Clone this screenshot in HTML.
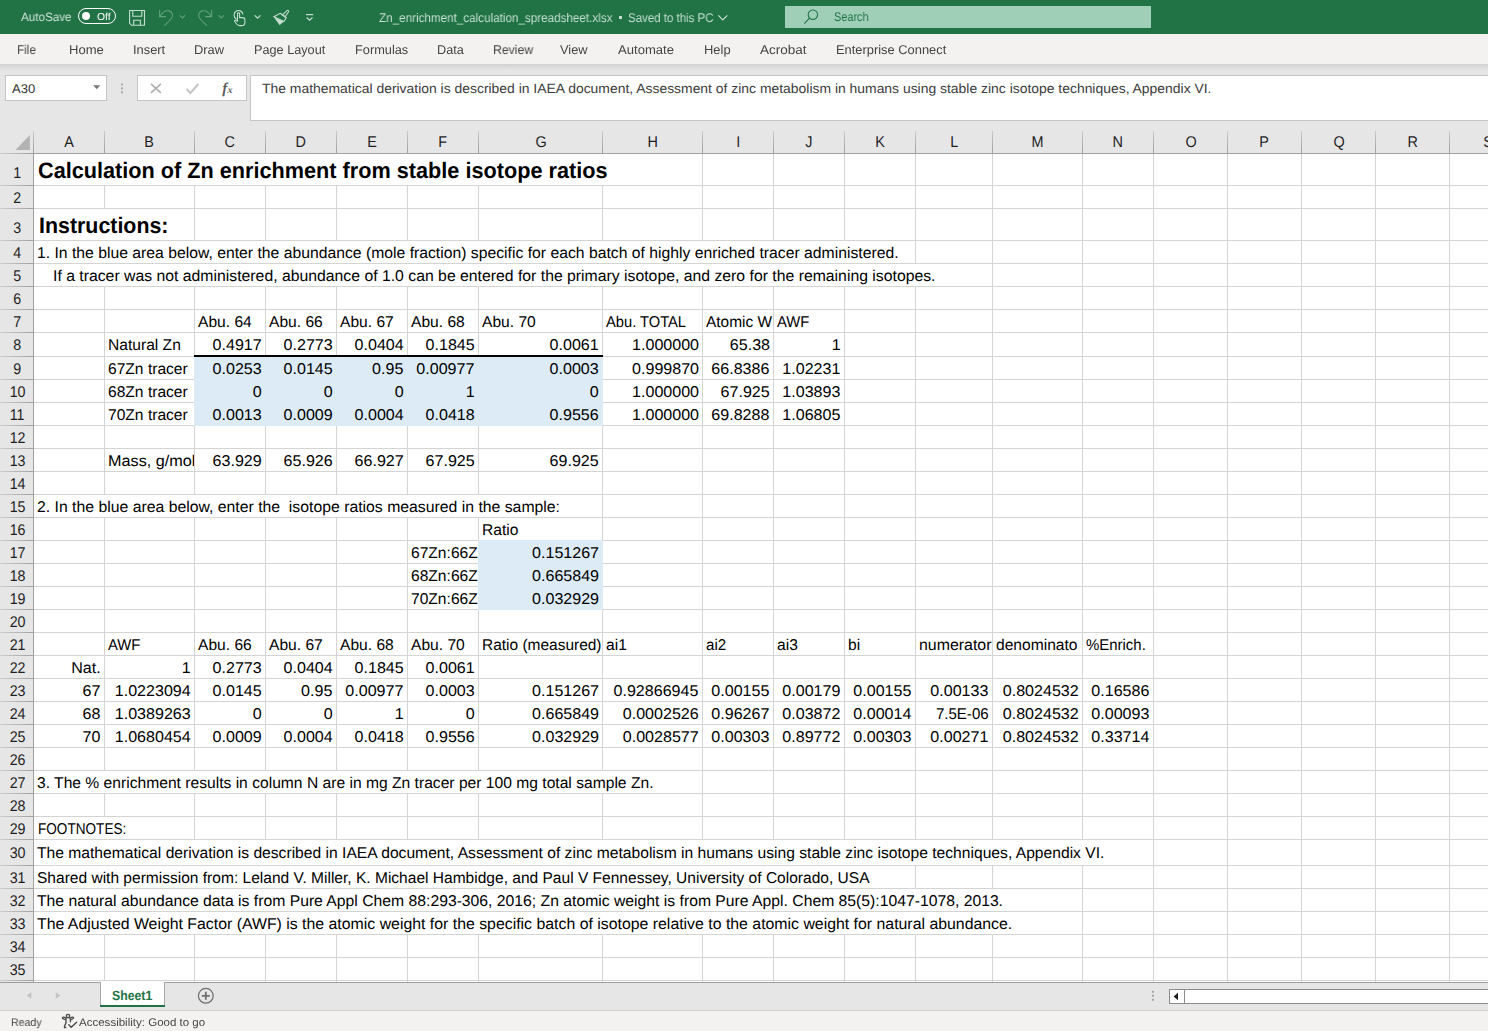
<!DOCTYPE html>
<html lang="en"><head><meta charset="utf-8"><title>Zn_enrichment_calculation_spreadsheet.xlsx - Excel</title>
<style>
html,body{margin:0;padding:0;width:1488px;height:1031px;overflow:hidden;background:#e6e6e6;font-family:'Liberation Sans', sans-serif;}
#app{position:relative;width:1488px;height:1031px;overflow:hidden;background:#e6e6e6;}
#app div,#app svg{position:absolute;}
section,header,nav,footer,main{display:block;position:absolute;left:0;top:0;width:1488px;height:0;}
.t{white-space:pre;line-height:normal;color:#000;text-rendering:geometricPrecision;}
.g{will-change:transform;}
.clip{}
#titlebar-bg{left:0;top:0;width:1488px;height:34px;background:#217346;}
#ribbon-bg{left:0;top:34px;width:1488px;height:30px;background:#f3f2f1;}
#ribbon-shadow{left:0;top:64px;width:1488px;height:7px;background:linear-gradient(#cfcfcf,#dadada 35%,#e6e6e6);}
#grid-bg{left:34px;top:154px;width:1454px;height:828px;background:#fff;}
</style></head><body><div id="app">
<header id="titlebar"><div id="titlebar-bg"></div>
<div style="left:785px;top:6px;width:366px;height:22px;background:#a0cfb8"></div>
<div class="t g" style="top:10px;font-size:12.1px;left:21px;color:#cfe4d8;transform:scaleX(0.9628);transform-origin:0 0">AutoSave</div>
<div class="t g" style="top:12px;font-size:10.2px;left:97px;color:#ffffff;transform:scaleX(1.0145);transform-origin:0 0">Off</div>
<div class="t g" style="top:11px;font-size:12.6px;left:378.6px;color:#c4dfd0;transform:scaleX(0.9265);transform-origin:0 0">Zn_enrichment_calculation_spreadsheet.xlsx</div>
<div class="t g" style="top:11px;font-size:12.6px;left:628px;color:#c4dfd0;transform:scaleX(0.9114);transform-origin:0 0">Saved to this PC</div>
<div class="t g" style="top:10px;font-size:12.6px;left:834px;color:#217346;transform:scaleX(0.8645);transform-origin:0 0">Search</div>
<div style="left:77.5px;top:7.5px;width:38px;height:16px;border:1.3px solid #fff;border-radius:9px;box-sizing:border-box"></div>
<div style="left:82px;top:12px;width:8px;height:8px;border-radius:50%;background:#fff"></div>
<div style="left:618.7px;top:16.4px;width:3px;height:3px;background:#c4dfd0"></div>
<svg style="left:0;top:0" width="1488" height="34" viewBox="0 0 1488 34" fill="none" stroke-linecap="butt">
<g stroke="#c4dfd0" stroke-width="1.1">
<path d="M129.6 10.5H144.5V25.3H131.6L129.6 23.3Z"/><path d="M132.8 10.5V16.2H141.8V10.5"/><path d="M133.7 25.3V20.3H140.4V25.3"/>
<path d="M254.7 15.4L257.6 18.2L260.5 15.4" stroke-width="1.2"/>
<path d="M306 14.6H313.2" stroke-width="1.2"/><path d="M306.7 17.5L309.6 20.1L312.5 17.5" stroke-width="1.2"/>
<path d="M718.3 15.4L722.8 19.9L727.3 15.4" stroke-width="1.2"/>
<path d="M236.5 19.5C233.2 17.5 233.4 13 236 11.3C238.6 9.6 242.5 10.8 243 14.5"/>
<path d="M237.5 21V13.6C237.5 12.4 239.6 12.4 239.6 13.6V17.6H242.6C244 17.6 244.9 18.4 244.9 19.8V22.5C244.9 24.4 243.6 25.6 241.8 25.6H239.6C238.2 25.6 237.4 25 236.6 24L234.6 21.3C234.3 20.6 235.3 19.9 236 20.4L237.5 21.6"/>
<path d="M287.3 10.4C288.1 9.9 289.1 10.9 288.6 11.7L285 16.8L282.4 14.9Z"/>
<path d="M280.2 13.3L286.3 17.7L284 21.4L273.9 16.8Z"/>
</g>
<path d="M274.5 17.5L283.6 21.6L279.6 24.8Z" fill="#c4dfd0" stroke="#c4dfd0" stroke-width="0.6"/>
<g stroke="#63a07f" stroke-width="1.1">
<path d="M159.6 10.1V16.6H166"/><path d="M160 16.3C163 11.5 166.5 10.2 169.2 10.9C172.4 11.8 173.5 15.3 171.5 18.2C170.5 19.6 166.5 23.5 164.3 25.7"/>
<path d="M179.9 15.4L182.5 17.9L185.1 15.4"/>
<path d="M211.6 10.1V16.6H205.2"/><path d="M211.2 16.3C208.2 11.5 204.7 10.2 202 10.9C198.8 11.8 197.7 15.3 199.7 18.2C200.7 19.6 204.7 23.5 206.9 25.7"/>
<path d="M218.7 15.4L221.3 17.9L223.9 15.4"/>
</g>
<g stroke="#217346" stroke-width="1.1"><circle cx="812.9" cy="14.7" r="4.7"/><path d="M809.5 18.1L804.3 23.7"/></g>
</svg></header>
<nav id="ribbon"><div id="ribbon-bg"></div><div id="ribbon-shadow"></div>
<div class="t g" style="top:43px;font-size:12.7px;left:16.6px;color:#444444;transform:scaleX(0.9241);transform-origin:0 0">File</div>
<div class="t g" style="top:43px;font-size:12.7px;left:68.8px;color:#444444;transform:scaleX(1.0283);transform-origin:0 0">Home</div>
<div class="t g" style="top:43px;font-size:12.7px;left:132.6px;color:#444444;transform:scaleX(1.0147);transform-origin:0 0">Insert</div>
<div class="t g" style="top:43px;font-size:12.7px;left:193.8px;color:#444444;transform:scaleX(1.0132);transform-origin:0 0">Draw</div>
<div class="t g" style="top:43px;font-size:12.7px;left:253.8px;color:#444444;transform:scaleX(0.9979);transform-origin:0 0">Page Layout</div>
<div class="t g" style="top:43px;font-size:12.7px;left:354.7px;color:#444444;transform:scaleX(1.0061);transform-origin:0 0">Formulas</div>
<div class="t g" style="top:43px;font-size:12.7px;left:436.9px;color:#444444;transform:scaleX(0.9883);transform-origin:0 0">Data</div>
<div class="t g" style="top:43px;font-size:12.7px;left:492.8px;color:#444444;transform:scaleX(0.9637);transform-origin:0 0">Review</div>
<div class="t g" style="top:43px;font-size:12.7px;left:560.2px;color:#444444;transform:scaleX(1.0117);transform-origin:0 0">View</div>
<div class="t g" style="top:43px;font-size:12.7px;left:617.5px;color:#444444;transform:scaleX(1.0311);transform-origin:0 0">Automate</div>
<div class="t g" style="top:43px;font-size:12.7px;left:703.8px;color:#444444;transform:scaleX(1.0194);transform-origin:0 0">Help</div>
<div class="t g" style="top:43px;font-size:12.7px;left:759.5px;color:#444444;transform:scaleX(1.0632);transform-origin:0 0">Acrobat</div>
<div class="t g" style="top:43px;font-size:12.7px;left:835.8px;color:#444444;transform:scaleX(1.0156);transform-origin:0 0">Enterprise Connect</div></nav>
<section id="formulabar">
<div style="left:5px;top:75px;width:102px;height:26px;background:#fff;border:1px solid #c6c6c6;box-sizing:border-box"></div>
<div style="left:137px;top:75px;width:110px;height:26px;background:#fff;border:1px solid #c6c6c6;box-sizing:border-box"></div>
<div style="left:250px;top:75px;width:1240px;height:46px;background:#fff;border:1px solid #c6c6c6;box-sizing:border-box"></div>
<div class="t" style="top:82px;font-size:12.6px;left:11.7px;color:#333333;transform:scaleX(1.0347);transform-origin:0 0">A30</div>
<div class="t" style="top:81px;font-size:13.3px;left:261.6px;color:#3b3b3b;transform:scaleX(1.0461);transform-origin:0 0">The mathematical derivation is described in IAEA document, Assessment of zinc metabolism in humans using stable zinc isotope techniques, Appendix VI.</div>
<div class="t" style="top:81px;font-size:15px;left:222.2px;color:#5e5e5e;font-weight:bold;font-style:italic;font-family:'Liberation Serif', serif">f</div>
<div class="t" style="top:85px;font-size:10px;left:227.6px;color:#5e5e5e;font-weight:bold;font-style:italic;font-family:'Liberation Serif', serif">x</div>
<svg style="left:0;top:70px" width="260" height="40" viewBox="0 70 260 40" fill="none">
<path d="M93.2 85.2H100.2L96.7 89.2Z" fill="#777"/>
<g fill="#acacac"><rect x="121" y="83.5" width="2" height="2"/><rect x="121" y="87.4" width="2" height="2"/><rect x="121" y="91.2" width="2" height="2"/></g>
<path d="M151 83.8L160.8 92.8M160.8 83.8L151 92.8" stroke="#b0b0b0" stroke-width="1.6"/>
<path d="M186.6 89L190.4 93L198.4 84" stroke="#c4c4c4" stroke-width="1.9"/>
</svg></section>
<main id="sheet"><div id="grid-bg"></div>
<div style="left:34px;top:185px;width:1454px;height:1px;background:#d4d4d4"></div>
<div style="left:34px;top:208px;width:1454px;height:1px;background:#d4d4d4"></div>
<div style="left:34px;top:240px;width:1454px;height:1px;background:#d4d4d4"></div>
<div style="left:34px;top:263px;width:1454px;height:1px;background:#d4d4d4"></div>
<div style="left:34px;top:286px;width:1454px;height:1px;background:#d4d4d4"></div>
<div style="left:34px;top:309px;width:1454px;height:1px;background:#d4d4d4"></div>
<div style="left:34px;top:332px;width:1454px;height:1px;background:#d4d4d4"></div>
<div style="left:34px;top:356px;width:1454px;height:1px;background:#d4d4d4"></div>
<div style="left:34px;top:379px;width:1454px;height:1px;background:#d4d4d4"></div>
<div style="left:34px;top:402px;width:1454px;height:1px;background:#d4d4d4"></div>
<div style="left:34px;top:425px;width:1454px;height:1px;background:#d4d4d4"></div>
<div style="left:34px;top:448px;width:1454px;height:1px;background:#d4d4d4"></div>
<div style="left:34px;top:471px;width:1454px;height:1px;background:#d4d4d4"></div>
<div style="left:34px;top:494px;width:1454px;height:1px;background:#d4d4d4"></div>
<div style="left:34px;top:517px;width:1454px;height:1px;background:#d4d4d4"></div>
<div style="left:34px;top:540px;width:1454px;height:1px;background:#d4d4d4"></div>
<div style="left:34px;top:563px;width:1454px;height:1px;background:#d4d4d4"></div>
<div style="left:34px;top:586px;width:1454px;height:1px;background:#d4d4d4"></div>
<div style="left:34px;top:609px;width:1454px;height:1px;background:#d4d4d4"></div>
<div style="left:34px;top:632px;width:1454px;height:1px;background:#d4d4d4"></div>
<div style="left:34px;top:655px;width:1454px;height:1px;background:#d4d4d4"></div>
<div style="left:34px;top:678px;width:1454px;height:1px;background:#d4d4d4"></div>
<div style="left:34px;top:701px;width:1454px;height:1px;background:#d4d4d4"></div>
<div style="left:34px;top:724px;width:1454px;height:1px;background:#d4d4d4"></div>
<div style="left:34px;top:747px;width:1454px;height:1px;background:#d4d4d4"></div>
<div style="left:34px;top:770px;width:1454px;height:1px;background:#d4d4d4"></div>
<div style="left:34px;top:793px;width:1454px;height:1px;background:#d4d4d4"></div>
<div style="left:34px;top:816px;width:1454px;height:1px;background:#d4d4d4"></div>
<div style="left:34px;top:839px;width:1454px;height:1px;background:#d4d4d4"></div>
<div style="left:34px;top:865px;width:1454px;height:1px;background:#d4d4d4"></div>
<div style="left:34px;top:888px;width:1454px;height:1px;background:#d4d4d4"></div>
<div style="left:34px;top:911px;width:1454px;height:1px;background:#d4d4d4"></div>
<div style="left:34px;top:934px;width:1454px;height:1px;background:#d4d4d4"></div>
<div style="left:34px;top:957px;width:1454px;height:1px;background:#d4d4d4"></div>
<div style="left:34px;top:980px;width:1454px;height:1px;background:#d4d4d4"></div>
<div style="left:104px;top:154px;width:1px;height:828px;background:#d4d4d4"></div>
<div style="left:194px;top:154px;width:1px;height:828px;background:#d4d4d4"></div>
<div style="left:265px;top:154px;width:1px;height:828px;background:#d4d4d4"></div>
<div style="left:336px;top:154px;width:1px;height:828px;background:#d4d4d4"></div>
<div style="left:407px;top:154px;width:1px;height:828px;background:#d4d4d4"></div>
<div style="left:478px;top:154px;width:1px;height:828px;background:#d4d4d4"></div>
<div style="left:602px;top:154px;width:1px;height:828px;background:#d4d4d4"></div>
<div style="left:702px;top:154px;width:1px;height:828px;background:#d4d4d4"></div>
<div style="left:773px;top:154px;width:1px;height:828px;background:#d4d4d4"></div>
<div style="left:844px;top:154px;width:1px;height:828px;background:#d4d4d4"></div>
<div style="left:915px;top:154px;width:1px;height:828px;background:#d4d4d4"></div>
<div style="left:992px;top:154px;width:1px;height:828px;background:#d4d4d4"></div>
<div style="left:1082px;top:154px;width:1px;height:828px;background:#d4d4d4"></div>
<div style="left:1153px;top:154px;width:1px;height:828px;background:#d4d4d4"></div>
<div style="left:1227px;top:154px;width:1px;height:828px;background:#d4d4d4"></div>
<div style="left:1301px;top:154px;width:1px;height:828px;background:#d4d4d4"></div>
<div style="left:1375px;top:154px;width:1px;height:828px;background:#d4d4d4"></div>
<div style="left:1449px;top:154px;width:1px;height:828px;background:#d4d4d4"></div>
<div style="left:34px;top:154px;width:569px;height:31px;background:#fff"></div>
<div style="left:34px;top:209px;width:71px;height:31px;background:#fff"></div>
<div style="left:34px;top:241px;width:811px;height:22px;background:#fff"></div>
<div style="left:34px;top:264px;width:882px;height:22px;background:#fff"></div>
<div style="left:34px;top:495px;width:445px;height:22px;background:#fff"></div>
<div style="left:34px;top:771px;width:569px;height:22px;background:#fff"></div>
<div style="left:34px;top:817px;width:71px;height:22px;background:#fff"></div>
<div style="left:34px;top:840px;width:1049px;height:25px;background:#fff"></div>
<div style="left:34px;top:866px;width:811px;height:22px;background:#fff"></div>
<div style="left:34px;top:889px;width:959px;height:22px;background:#fff"></div>
<div style="left:34px;top:912px;width:959px;height:22px;background:#fff"></div>
<div style="left:194px;top:357px;width:409px;height:69px;background:#ddebf7"></div>
<div style="left:478px;top:540px;width:125px;height:70px;background:#ddebf7"></div>
<div style="left:194px;top:355px;width:409px;height:2px;background:#000"></div>
<div class="t" style="top:158px;font-size:22.3px;left:38px;font-weight:bold;transform:scaleX(0.9718);transform-origin:0 0">Calculation of Zn enrichment from stable isotope ratios</div>
<div class="t" style="top:213px;font-size:22.3px;left:38.6px;font-weight:bold;transform:scaleX(0.959);transform-origin:0 0">Instructions:</div>
<div class="t" style="top:245px;font-size:15.6px;left:37.1px;transform:scaleX(1.009);transform-origin:0 0">1. In the blue area below, enter the abundance (mole fraction) specific for each batch of highly enriched tracer administered.</div>
<div class="t" style="top:268px;font-size:15.6px;left:52.9px;transform:scaleX(1.012);transform-origin:0 0">If a tracer was not administered, abundance of 1.0 can be entered for the primary isotope, and zero for the remaining isotopes.</div>
<div class="t" style="top:314px;font-size:15.6px;left:198px">Abu. 64</div>
<div class="t" style="top:314px;font-size:15.6px;left:269px">Abu. 66</div>
<div class="t" style="top:314px;font-size:15.6px;left:340px">Abu. 67</div>
<div class="t" style="top:314px;font-size:15.6px;left:411px">Abu. 68</div>
<div class="t" style="top:314px;font-size:15.6px;left:482px">Abu. 70</div>
<div class="t" style="top:314px;font-size:15.6px;left:606px;transform:scaleX(0.942);transform-origin:0 0">Abu. TOTAL</div>
<div class="clip" style="left:706px;top:314px;width:67px;height:19px;overflow:hidden"><div class="t" style="font-size:15.6px;transform:scaleX(0.99);transform-origin:0 0;left:0;top:0">Atomic W</div></div>
<div class="t" style="top:314px;font-size:15.6px;left:777px;transform:scaleX(0.95);transform-origin:0 0">AWF</div>
<div class="clip" style="left:108px;top:337px;width:86px;height:19px;overflow:hidden"><div class="t" style="font-size:15.6px;left:0;top:0">Natural Zn</div></div>
<div class="t" style="top:337px;font-size:15.6px;right:1226.3px;transform:scaleX(1.03);transform-origin:100% 0">0.4917</div>
<div class="t" style="top:337px;font-size:15.6px;right:1155.3px;transform:scaleX(1.03);transform-origin:100% 0">0.2773</div>
<div class="t" style="top:337px;font-size:15.6px;right:1084.3px;transform:scaleX(1.03);transform-origin:100% 0">0.0404</div>
<div class="t" style="top:337px;font-size:15.6px;right:1013.3px;transform:scaleX(1.03);transform-origin:100% 0">0.1845</div>
<div class="t" style="top:337px;font-size:15.6px;right:889.3px;transform:scaleX(1.03);transform-origin:100% 0">0.0061</div>
<div class="t" style="top:337px;font-size:15.6px;right:789.3px;transform:scaleX(1.03);transform-origin:100% 0">1.000000</div>
<div class="t" style="top:337px;font-size:15.6px;right:718.3px;transform:scaleX(1.03);transform-origin:100% 0">65.38</div>
<div class="t" style="top:337px;font-size:15.6px;right:647.3px;transform:scaleX(1.03);transform-origin:100% 0">1</div>
<div class="clip" style="left:108px;top:361px;width:86px;height:19px;overflow:hidden"><div class="t" style="font-size:15.6px;left:0;top:0">67Zn tracer</div></div>
<div class="t" style="top:361px;font-size:15.6px;right:1226.3px;transform:scaleX(1.03);transform-origin:100% 0">0.0253</div>
<div class="t" style="top:361px;font-size:15.6px;right:1155.3px;transform:scaleX(1.03);transform-origin:100% 0">0.0145</div>
<div class="t" style="top:361px;font-size:15.6px;right:1084.3px;transform:scaleX(1.03);transform-origin:100% 0">0.95</div>
<div class="t" style="top:361px;font-size:15.6px;right:1013.3px;transform:scaleX(1.03);transform-origin:100% 0">0.00977</div>
<div class="t" style="top:361px;font-size:15.6px;right:889.3px;transform:scaleX(1.03);transform-origin:100% 0">0.0003</div>
<div class="t" style="top:361px;font-size:15.6px;right:789.3px;transform:scaleX(1.03);transform-origin:100% 0">0.999870</div>
<div class="t" style="top:361px;font-size:15.6px;right:718.3px;transform:scaleX(1.03);transform-origin:100% 0">66.8386</div>
<div class="t" style="top:361px;font-size:15.6px;right:647.3px;transform:scaleX(1.03);transform-origin:100% 0">1.02231</div>
<div class="clip" style="left:108px;top:384px;width:86px;height:19px;overflow:hidden"><div class="t" style="font-size:15.6px;left:0;top:0">68Zn tracer</div></div>
<div class="t" style="top:384px;font-size:15.6px;right:1226.3px;transform:scaleX(1.03);transform-origin:100% 0">0</div>
<div class="t" style="top:384px;font-size:15.6px;right:1155.3px;transform:scaleX(1.03);transform-origin:100% 0">0</div>
<div class="t" style="top:384px;font-size:15.6px;right:1084.3px;transform:scaleX(1.03);transform-origin:100% 0">0</div>
<div class="t" style="top:384px;font-size:15.6px;right:1013.3px;transform:scaleX(1.03);transform-origin:100% 0">1</div>
<div class="t" style="top:384px;font-size:15.6px;right:889.3px;transform:scaleX(1.03);transform-origin:100% 0">0</div>
<div class="t" style="top:384px;font-size:15.6px;right:789.3px;transform:scaleX(1.03);transform-origin:100% 0">1.000000</div>
<div class="t" style="top:384px;font-size:15.6px;right:718.3px;transform:scaleX(1.03);transform-origin:100% 0">67.925</div>
<div class="t" style="top:384px;font-size:15.6px;right:647.3px;transform:scaleX(1.03);transform-origin:100% 0">1.03893</div>
<div class="clip" style="left:108px;top:407px;width:86px;height:19px;overflow:hidden"><div class="t" style="font-size:15.6px;left:0;top:0">70Zn tracer</div></div>
<div class="t" style="top:407px;font-size:15.6px;right:1226.3px;transform:scaleX(1.03);transform-origin:100% 0">0.0013</div>
<div class="t" style="top:407px;font-size:15.6px;right:1155.3px;transform:scaleX(1.03);transform-origin:100% 0">0.0009</div>
<div class="t" style="top:407px;font-size:15.6px;right:1084.3px;transform:scaleX(1.03);transform-origin:100% 0">0.0004</div>
<div class="t" style="top:407px;font-size:15.6px;right:1013.3px;transform:scaleX(1.03);transform-origin:100% 0">0.0418</div>
<div class="t" style="top:407px;font-size:15.6px;right:889.3px;transform:scaleX(1.03);transform-origin:100% 0">0.9556</div>
<div class="t" style="top:407px;font-size:15.6px;right:789.3px;transform:scaleX(1.03);transform-origin:100% 0">1.000000</div>
<div class="t" style="top:407px;font-size:15.6px;right:718.3px;transform:scaleX(1.03);transform-origin:100% 0">69.8288</div>
<div class="t" style="top:407px;font-size:15.6px;right:647.3px;transform:scaleX(1.03);transform-origin:100% 0">1.06805</div>
<div class="clip" style="left:108px;top:453px;width:86px;height:19px;overflow:hidden"><div class="t" style="font-size:15.6px;transform:scaleX(1.04);transform-origin:0 0;left:0;top:0">Mass, g/mol</div></div>
<div class="t" style="top:453px;font-size:15.6px;right:1226.3px;transform:scaleX(1.03);transform-origin:100% 0">63.929</div>
<div class="t" style="top:453px;font-size:15.6px;right:1155.3px;transform:scaleX(1.03);transform-origin:100% 0">65.926</div>
<div class="t" style="top:453px;font-size:15.6px;right:1084.3px;transform:scaleX(1.03);transform-origin:100% 0">66.927</div>
<div class="t" style="top:453px;font-size:15.6px;right:1013.3px;transform:scaleX(1.03);transform-origin:100% 0">67.925</div>
<div class="t" style="top:453px;font-size:15.6px;right:889.3px;transform:scaleX(1.03);transform-origin:100% 0">69.925</div>
<div class="t" style="top:499px;font-size:15.6px;left:37px;transform:scaleX(1.0123);transform-origin:0 0">2. In the blue area below, enter the  isotope ratios measured in the sample:</div>
<div class="t" style="top:522px;font-size:15.6px;left:482px">Ratio</div>
<div class="clip" style="left:411px;top:545px;width:67px;height:19px;overflow:hidden"><div class="t" style="font-size:15.6px;left:0;top:0">67Zn:66Z</div></div>
<div class="t" style="top:545px;font-size:15.6px;right:889.3px;transform:scaleX(1.03);transform-origin:100% 0">0.151267</div>
<div class="clip" style="left:411px;top:568px;width:67px;height:19px;overflow:hidden"><div class="t" style="font-size:15.6px;left:0;top:0">68Zn:66Z</div></div>
<div class="t" style="top:568px;font-size:15.6px;right:889.3px;transform:scaleX(1.03);transform-origin:100% 0">0.665849</div>
<div class="clip" style="left:411px;top:591px;width:67px;height:19px;overflow:hidden"><div class="t" style="font-size:15.6px;left:0;top:0">70Zn:66Z</div></div>
<div class="t" style="top:591px;font-size:15.6px;right:889.3px;transform:scaleX(1.03);transform-origin:100% 0">0.032929</div>
<div class="t" style="top:637px;font-size:15.6px;left:108px;transform:scaleX(0.95);transform-origin:0 0">AWF</div>
<div class="t" style="top:637px;font-size:15.6px;left:198px">Abu. 66</div>
<div class="t" style="top:637px;font-size:15.6px;left:269px">Abu. 67</div>
<div class="t" style="top:637px;font-size:15.6px;left:340px">Abu. 68</div>
<div class="t" style="top:637px;font-size:15.6px;left:411px">Abu. 70</div>
<div class="clip" style="left:482px;top:637px;width:120px;height:19px;overflow:hidden"><div class="t" style="font-size:15.6px;transform:scaleX(0.992);transform-origin:0 0;left:0;top:0">Ratio (measured)</div></div>
<div class="t" style="top:637px;font-size:15.6px;left:606px">ai1</div>
<div class="t" style="top:637px;font-size:15.6px;left:706px;transform:scaleX(0.97);transform-origin:0 0">ai2</div>
<div class="t" style="top:637px;font-size:15.6px;left:777px">ai3</div>
<div class="t" style="top:637px;font-size:15.6px;left:848px">bi</div>
<div class="clip" style="left:919px;top:637px;width:73px;height:19px;overflow:hidden"><div class="t" style="font-size:15.6px;transform:scaleX(1.02);transform-origin:0 0;left:0;top:0">numerator</div></div>
<div class="clip" style="left:996px;top:637px;width:86px;height:19px;overflow:hidden"><div class="t" style="font-size:15.6px;transform:scaleX(1.0);transform-origin:0 0;left:0;top:0">denominato</div></div>
<div class="t" style="top:637px;font-size:15.6px;left:1086px;transform:scaleX(0.958);transform-origin:0 0">%Enrich.</div>
<div class="t" style="top:660px;font-size:15.6px;right:1387.3px;transform:scaleX(1.03);transform-origin:100% 0">Nat.</div>
<div class="t" style="top:660px;font-size:15.6px;right:1297.3px;transform:scaleX(1.03);transform-origin:100% 0">1</div>
<div class="t" style="top:660px;font-size:15.6px;right:1226.3px;transform:scaleX(1.03);transform-origin:100% 0">0.2773</div>
<div class="t" style="top:660px;font-size:15.6px;right:1155.3px;transform:scaleX(1.03);transform-origin:100% 0">0.0404</div>
<div class="t" style="top:660px;font-size:15.6px;right:1084.3px;transform:scaleX(1.03);transform-origin:100% 0">0.1845</div>
<div class="t" style="top:660px;font-size:15.6px;right:1013.3px;transform:scaleX(1.03);transform-origin:100% 0">0.0061</div>
<div class="t" style="top:683px;font-size:15.6px;right:1387.3px;transform:scaleX(1.03);transform-origin:100% 0">67</div>
<div class="t" style="top:683px;font-size:15.6px;right:1297.3px;transform:scaleX(1.03);transform-origin:100% 0">1.0223094</div>
<div class="t" style="top:683px;font-size:15.6px;right:1226.3px;transform:scaleX(1.03);transform-origin:100% 0">0.0145</div>
<div class="t" style="top:683px;font-size:15.6px;right:1155.3px;transform:scaleX(1.03);transform-origin:100% 0">0.95</div>
<div class="t" style="top:683px;font-size:15.6px;right:1084.3px;transform:scaleX(1.03);transform-origin:100% 0">0.00977</div>
<div class="t" style="top:683px;font-size:15.6px;right:1013.3px;transform:scaleX(1.03);transform-origin:100% 0">0.0003</div>
<div class="t" style="top:683px;font-size:15.6px;right:889.3px;transform:scaleX(1.03);transform-origin:100% 0">0.151267</div>
<div class="t" style="top:683px;font-size:15.6px;right:789.3px;transform:scaleX(1.03);transform-origin:100% 0">0.92866945</div>
<div class="t" style="top:683px;font-size:15.6px;right:718.3px;transform:scaleX(1.03);transform-origin:100% 0">0.00155</div>
<div class="t" style="top:683px;font-size:15.6px;right:647.3px;transform:scaleX(1.03);transform-origin:100% 0">0.00179</div>
<div class="t" style="top:683px;font-size:15.6px;right:576.3px;transform:scaleX(1.03);transform-origin:100% 0">0.00155</div>
<div class="t" style="top:683px;font-size:15.6px;right:499.3px;transform:scaleX(1.03);transform-origin:100% 0">0.00133</div>
<div class="t" style="top:683px;font-size:15.6px;right:409.3px;transform:scaleX(1.03);transform-origin:100% 0">0.8024532</div>
<div class="t" style="top:683px;font-size:15.6px;right:338.3px;transform:scaleX(1.03);transform-origin:100% 0">0.16586</div>
<div class="t" style="top:706px;font-size:15.6px;right:1387.3px;transform:scaleX(1.03);transform-origin:100% 0">68</div>
<div class="t" style="top:706px;font-size:15.6px;right:1297.3px;transform:scaleX(1.03);transform-origin:100% 0">1.0389263</div>
<div class="t" style="top:706px;font-size:15.6px;right:1226.3px;transform:scaleX(1.03);transform-origin:100% 0">0</div>
<div class="t" style="top:706px;font-size:15.6px;right:1155.3px;transform:scaleX(1.03);transform-origin:100% 0">0</div>
<div class="t" style="top:706px;font-size:15.6px;right:1084.3px;transform:scaleX(1.03);transform-origin:100% 0">1</div>
<div class="t" style="top:706px;font-size:15.6px;right:1013.3px;transform:scaleX(1.03);transform-origin:100% 0">0</div>
<div class="t" style="top:706px;font-size:15.6px;right:889.3px;transform:scaleX(1.03);transform-origin:100% 0">0.665849</div>
<div class="t" style="top:706px;font-size:15.6px;right:789.3px;transform:scaleX(1.03);transform-origin:100% 0">0.0002526</div>
<div class="t" style="top:706px;font-size:15.6px;right:718.3px;transform:scaleX(1.03);transform-origin:100% 0">0.96267</div>
<div class="t" style="top:706px;font-size:15.6px;right:647.3px;transform:scaleX(1.03);transform-origin:100% 0">0.03872</div>
<div class="t" style="top:706px;font-size:15.6px;right:576.3px;transform:scaleX(1.03);transform-origin:100% 0">0.00014</div>
<div class="t" style="top:706px;font-size:15.6px;right:499.3px;transform:scaleX(0.965);transform-origin:100% 0">7.5E-06</div>
<div class="t" style="top:706px;font-size:15.6px;right:409.3px;transform:scaleX(1.03);transform-origin:100% 0">0.8024532</div>
<div class="t" style="top:706px;font-size:15.6px;right:338.3px;transform:scaleX(1.03);transform-origin:100% 0">0.00093</div>
<div class="t" style="top:729px;font-size:15.6px;right:1387.3px;transform:scaleX(1.03);transform-origin:100% 0">70</div>
<div class="t" style="top:729px;font-size:15.6px;right:1297.3px;transform:scaleX(1.03);transform-origin:100% 0">1.0680454</div>
<div class="t" style="top:729px;font-size:15.6px;right:1226.3px;transform:scaleX(1.03);transform-origin:100% 0">0.0009</div>
<div class="t" style="top:729px;font-size:15.6px;right:1155.3px;transform:scaleX(1.03);transform-origin:100% 0">0.0004</div>
<div class="t" style="top:729px;font-size:15.6px;right:1084.3px;transform:scaleX(1.03);transform-origin:100% 0">0.0418</div>
<div class="t" style="top:729px;font-size:15.6px;right:1013.3px;transform:scaleX(1.03);transform-origin:100% 0">0.9556</div>
<div class="t" style="top:729px;font-size:15.6px;right:889.3px;transform:scaleX(1.03);transform-origin:100% 0">0.032929</div>
<div class="t" style="top:729px;font-size:15.6px;right:789.3px;transform:scaleX(1.03);transform-origin:100% 0">0.0028577</div>
<div class="t" style="top:729px;font-size:15.6px;right:718.3px;transform:scaleX(1.03);transform-origin:100% 0">0.00303</div>
<div class="t" style="top:729px;font-size:15.6px;right:647.3px;transform:scaleX(1.03);transform-origin:100% 0">0.89772</div>
<div class="t" style="top:729px;font-size:15.6px;right:576.3px;transform:scaleX(1.03);transform-origin:100% 0">0.00303</div>
<div class="t" style="top:729px;font-size:15.6px;right:499.3px;transform:scaleX(1.03);transform-origin:100% 0">0.00271</div>
<div class="t" style="top:729px;font-size:15.6px;right:409.3px;transform:scaleX(1.03);transform-origin:100% 0">0.8024532</div>
<div class="t" style="top:729px;font-size:15.6px;right:338.3px;transform:scaleX(1.03);transform-origin:100% 0">0.33714</div>
<div class="t" style="top:775px;font-size:15.6px;left:37px;transform:scaleX(1.0023);transform-origin:0 0">3. The % enrichment results in column N are in mg Zn tracer per 100 mg total sample Zn.</div>
<div class="t" style="top:821px;font-size:15.6px;left:37.5px;transform:scaleX(0.8712);transform-origin:0 0">FOOTNOTES:</div>
<div class="t" style="top:845px;font-size:15.6px;left:36.6px;transform:scaleX(1.0028);transform-origin:0 0">The mathematical derivation is described in IAEA document, Assessment of zinc metabolism in humans using stable zinc isotope techniques, Appendix VI.</div>
<div class="t" style="top:870px;font-size:15.6px;left:36.6px;transform:scaleX(0.9964);transform-origin:0 0">Shared with permission from: Leland V. Miller, K. Michael Hambidge, and Paul V Fennessey, University of Colorado, USA</div>
<div class="t" style="top:893px;font-size:15.6px;left:36.6px;transform:scaleX(1.0085);transform-origin:0 0">The natural abundance data is from Pure Appl Chem 88:293-306, 2016; Zn atomic weight is from Pure Appl. Chem 85(5):1047-1078, 2013.</div>
<div class="t" style="top:916px;font-size:15.6px;left:36.6px;transform:scaleX(1.0164);transform-origin:0 0">The Adjusted Weight Factor (AWF) is the atomic weight for the specific batch of isotope relative to the atomic weight for natural abundance.</div>
<div style="left:0;top:126px;width:1488px;height:28px;background:#e6e6e6"></div>
<div style="left:0;top:153px;width:1488px;height:1px;background:#a1a1a1"></div>
<div style="left:0;top:154px;width:33px;height:828px;background:#e6e6e6"></div>
<div style="left:33px;top:131px;width:1px;height:23px;background:linear-gradient(#c9c9c9,#a1a1a1)"></div>
<div style="left:33px;top:153px;width:1px;height:829px;background:#a1a1a1"></div>
<div style="left:0;top:153px;width:33px;height:1px;background:linear-gradient(to right,#cdcdcd,#a1a1a1)"></div>
<svg style="left:15px;top:134px" width="16" height="17" viewBox="0 0 16 17"><path d="M14.9 1V15.9H0.4Z" fill="#b3b3b3"/></svg>
<div style="left:104px;top:131px;width:1px;height:22px;background:linear-gradient(#c9c9c9,#a1a1a1)"></div>
<div style="left:194px;top:131px;width:1px;height:22px;background:linear-gradient(#c9c9c9,#a1a1a1)"></div>
<div style="left:265px;top:131px;width:1px;height:22px;background:linear-gradient(#c9c9c9,#a1a1a1)"></div>
<div style="left:336px;top:131px;width:1px;height:22px;background:linear-gradient(#c9c9c9,#a1a1a1)"></div>
<div style="left:407px;top:131px;width:1px;height:22px;background:linear-gradient(#c9c9c9,#a1a1a1)"></div>
<div style="left:478px;top:131px;width:1px;height:22px;background:linear-gradient(#c9c9c9,#a1a1a1)"></div>
<div style="left:602px;top:131px;width:1px;height:22px;background:linear-gradient(#c9c9c9,#a1a1a1)"></div>
<div style="left:702px;top:131px;width:1px;height:22px;background:linear-gradient(#c9c9c9,#a1a1a1)"></div>
<div style="left:773px;top:131px;width:1px;height:22px;background:linear-gradient(#c9c9c9,#a1a1a1)"></div>
<div style="left:844px;top:131px;width:1px;height:22px;background:linear-gradient(#c9c9c9,#a1a1a1)"></div>
<div style="left:915px;top:131px;width:1px;height:22px;background:linear-gradient(#c9c9c9,#a1a1a1)"></div>
<div style="left:992px;top:131px;width:1px;height:22px;background:linear-gradient(#c9c9c9,#a1a1a1)"></div>
<div style="left:1082px;top:131px;width:1px;height:22px;background:linear-gradient(#c9c9c9,#a1a1a1)"></div>
<div style="left:1153px;top:131px;width:1px;height:22px;background:linear-gradient(#c9c9c9,#a1a1a1)"></div>
<div style="left:1227px;top:131px;width:1px;height:22px;background:linear-gradient(#c9c9c9,#a1a1a1)"></div>
<div style="left:1301px;top:131px;width:1px;height:22px;background:linear-gradient(#c9c9c9,#a1a1a1)"></div>
<div style="left:1375px;top:131px;width:1px;height:22px;background:linear-gradient(#c9c9c9,#a1a1a1)"></div>
<div style="left:1449px;top:131px;width:1px;height:22px;background:linear-gradient(#c9c9c9,#a1a1a1)"></div>
<div style="left:0;top:185px;width:33px;height:1px;background:linear-gradient(to right,#cdcdcd,#a1a1a1)"></div>
<div style="left:0;top:208px;width:33px;height:1px;background:linear-gradient(to right,#cdcdcd,#a1a1a1)"></div>
<div style="left:0;top:240px;width:33px;height:1px;background:linear-gradient(to right,#cdcdcd,#a1a1a1)"></div>
<div style="left:0;top:263px;width:33px;height:1px;background:linear-gradient(to right,#cdcdcd,#a1a1a1)"></div>
<div style="left:0;top:286px;width:33px;height:1px;background:linear-gradient(to right,#cdcdcd,#a1a1a1)"></div>
<div style="left:0;top:309px;width:33px;height:1px;background:linear-gradient(to right,#cdcdcd,#a1a1a1)"></div>
<div style="left:0;top:332px;width:33px;height:1px;background:linear-gradient(to right,#cdcdcd,#a1a1a1)"></div>
<div style="left:0;top:356px;width:33px;height:1px;background:linear-gradient(to right,#cdcdcd,#a1a1a1)"></div>
<div style="left:0;top:379px;width:33px;height:1px;background:linear-gradient(to right,#cdcdcd,#a1a1a1)"></div>
<div style="left:0;top:402px;width:33px;height:1px;background:linear-gradient(to right,#cdcdcd,#a1a1a1)"></div>
<div style="left:0;top:425px;width:33px;height:1px;background:linear-gradient(to right,#cdcdcd,#a1a1a1)"></div>
<div style="left:0;top:448px;width:33px;height:1px;background:linear-gradient(to right,#cdcdcd,#a1a1a1)"></div>
<div style="left:0;top:471px;width:33px;height:1px;background:linear-gradient(to right,#cdcdcd,#a1a1a1)"></div>
<div style="left:0;top:494px;width:33px;height:1px;background:linear-gradient(to right,#cdcdcd,#a1a1a1)"></div>
<div style="left:0;top:517px;width:33px;height:1px;background:linear-gradient(to right,#cdcdcd,#a1a1a1)"></div>
<div style="left:0;top:540px;width:33px;height:1px;background:linear-gradient(to right,#cdcdcd,#a1a1a1)"></div>
<div style="left:0;top:563px;width:33px;height:1px;background:linear-gradient(to right,#cdcdcd,#a1a1a1)"></div>
<div style="left:0;top:586px;width:33px;height:1px;background:linear-gradient(to right,#cdcdcd,#a1a1a1)"></div>
<div style="left:0;top:609px;width:33px;height:1px;background:linear-gradient(to right,#cdcdcd,#a1a1a1)"></div>
<div style="left:0;top:632px;width:33px;height:1px;background:linear-gradient(to right,#cdcdcd,#a1a1a1)"></div>
<div style="left:0;top:655px;width:33px;height:1px;background:linear-gradient(to right,#cdcdcd,#a1a1a1)"></div>
<div style="left:0;top:678px;width:33px;height:1px;background:linear-gradient(to right,#cdcdcd,#a1a1a1)"></div>
<div style="left:0;top:701px;width:33px;height:1px;background:linear-gradient(to right,#cdcdcd,#a1a1a1)"></div>
<div style="left:0;top:724px;width:33px;height:1px;background:linear-gradient(to right,#cdcdcd,#a1a1a1)"></div>
<div style="left:0;top:747px;width:33px;height:1px;background:linear-gradient(to right,#cdcdcd,#a1a1a1)"></div>
<div style="left:0;top:770px;width:33px;height:1px;background:linear-gradient(to right,#cdcdcd,#a1a1a1)"></div>
<div style="left:0;top:793px;width:33px;height:1px;background:linear-gradient(to right,#cdcdcd,#a1a1a1)"></div>
<div style="left:0;top:816px;width:33px;height:1px;background:linear-gradient(to right,#cdcdcd,#a1a1a1)"></div>
<div style="left:0;top:839px;width:33px;height:1px;background:linear-gradient(to right,#cdcdcd,#a1a1a1)"></div>
<div style="left:0;top:865px;width:33px;height:1px;background:linear-gradient(to right,#cdcdcd,#a1a1a1)"></div>
<div style="left:0;top:888px;width:33px;height:1px;background:linear-gradient(to right,#cdcdcd,#a1a1a1)"></div>
<div style="left:0;top:911px;width:33px;height:1px;background:linear-gradient(to right,#cdcdcd,#a1a1a1)"></div>
<div style="left:0;top:934px;width:33px;height:1px;background:linear-gradient(to right,#cdcdcd,#a1a1a1)"></div>
<div style="left:0;top:957px;width:33px;height:1px;background:linear-gradient(to right,#cdcdcd,#a1a1a1)"></div>
<div style="left:0;top:980px;width:33px;height:1px;background:linear-gradient(to right,#cdcdcd,#a1a1a1)"></div>
<div class="t" style="top:134px;font-size:15.5px;left:63.8px;color:#1f1f1f;transform:scaleX(0.93);transform-origin:50% 0">A</div>
<div class="t" style="top:134px;font-size:15.5px;left:144.3px;color:#1f1f1f;transform:scaleX(0.93);transform-origin:50% 0">B</div>
<div class="t" style="top:134px;font-size:15.5px;left:224.4px;color:#1f1f1f;transform:scaleX(0.93);transform-origin:50% 0">C</div>
<div class="t" style="top:134px;font-size:15.5px;left:295.4px;color:#1f1f1f;transform:scaleX(0.93);transform-origin:50% 0">D</div>
<div class="t" style="top:134px;font-size:15.5px;left:366.8px;color:#1f1f1f;transform:scaleX(0.93);transform-origin:50% 0">E</div>
<div class="t" style="top:134px;font-size:15.5px;left:438.3px;color:#1f1f1f;transform:scaleX(0.93);transform-origin:50% 0">F</div>
<div class="t" style="top:134px;font-size:15.5px;left:534.5px;color:#1f1f1f;transform:scaleX(0.93);transform-origin:50% 0">G</div>
<div class="t" style="top:134px;font-size:15.5px;left:646.9px;color:#1f1f1f;transform:scaleX(0.93);transform-origin:50% 0">H</div>
<div class="t" style="top:134px;font-size:15.5px;left:735.8px;color:#1f1f1f;transform:scaleX(0.93);transform-origin:50% 0">I</div>
<div class="t" style="top:134px;font-size:15.5px;left:805.1px;color:#1f1f1f;transform:scaleX(0.93);transform-origin:50% 0">J</div>
<div class="t" style="top:134px;font-size:15.5px;left:874.8px;color:#1f1f1f;transform:scaleX(0.93);transform-origin:50% 0">K</div>
<div class="t" style="top:134px;font-size:15.5px;left:949.7px;color:#1f1f1f;transform:scaleX(0.93);transform-origin:50% 0">L</div>
<div class="t" style="top:134px;font-size:15.5px;left:1031.0px;color:#1f1f1f;transform:scaleX(0.93);transform-origin:50% 0">M</div>
<div class="t" style="top:134px;font-size:15.5px;left:1112.4px;color:#1f1f1f;transform:scaleX(0.93);transform-origin:50% 0">N</div>
<div class="t" style="top:134px;font-size:15.5px;left:1184.5px;color:#1f1f1f;transform:scaleX(0.93);transform-origin:50% 0">O</div>
<div class="t" style="top:134px;font-size:15.5px;left:1259.3px;color:#1f1f1f;transform:scaleX(0.93);transform-origin:50% 0">P</div>
<div class="t" style="top:134px;font-size:15.5px;left:1332.5px;color:#1f1f1f;transform:scaleX(0.93);transform-origin:50% 0">Q</div>
<div class="t" style="top:134px;font-size:15.5px;left:1406.9px;color:#1f1f1f;transform:scaleX(0.93);transform-origin:50% 0">R</div>
<div class="t" style="top:134px;font-size:15.5px;left:1482.8px;color:#1f1f1f;transform:scaleX(0.93);transform-origin:50% 0">S</div>
<div class="t" style="top:165px;font-size:15.5px;left:12.8px;color:#1f1f1f;transform:scaleX(0.92);transform-origin:50% 0">1</div>
<div class="t" style="top:190px;font-size:15.5px;left:12.8px;color:#1f1f1f;transform:scaleX(0.92);transform-origin:50% 0">2</div>
<div class="t" style="top:220px;font-size:15.5px;left:12.8px;color:#1f1f1f;transform:scaleX(0.92);transform-origin:50% 0">3</div>
<div class="t" style="top:245px;font-size:15.5px;left:12.8px;color:#1f1f1f;transform:scaleX(0.92);transform-origin:50% 0">4</div>
<div class="t" style="top:268px;font-size:15.5px;left:12.8px;color:#1f1f1f;transform:scaleX(0.92);transform-origin:50% 0">5</div>
<div class="t" style="top:291px;font-size:15.5px;left:12.8px;color:#1f1f1f;transform:scaleX(0.92);transform-origin:50% 0">6</div>
<div class="t" style="top:314px;font-size:15.5px;left:12.8px;color:#1f1f1f;transform:scaleX(0.92);transform-origin:50% 0">7</div>
<div class="t" style="top:337px;font-size:15.5px;left:12.8px;color:#1f1f1f;transform:scaleX(0.92);transform-origin:50% 0">8</div>
<div class="t" style="top:361px;font-size:15.5px;left:12.8px;color:#1f1f1f;transform:scaleX(0.92);transform-origin:50% 0">9</div>
<div class="t" style="top:384px;font-size:15.5px;left:8.5px;color:#1f1f1f;transform:scaleX(0.92);transform-origin:50% 0">10</div>
<div class="t" style="top:407px;font-size:15.5px;left:9.1px;color:#1f1f1f;transform:scaleX(0.92);transform-origin:50% 0">11</div>
<div class="t" style="top:430px;font-size:15.5px;left:8.5px;color:#1f1f1f;transform:scaleX(0.92);transform-origin:50% 0">12</div>
<div class="t" style="top:453px;font-size:15.5px;left:8.5px;color:#1f1f1f;transform:scaleX(0.92);transform-origin:50% 0">13</div>
<div class="t" style="top:476px;font-size:15.5px;left:8.5px;color:#1f1f1f;transform:scaleX(0.92);transform-origin:50% 0">14</div>
<div class="t" style="top:499px;font-size:15.5px;left:8.5px;color:#1f1f1f;transform:scaleX(0.92);transform-origin:50% 0">15</div>
<div class="t" style="top:522px;font-size:15.5px;left:8.5px;color:#1f1f1f;transform:scaleX(0.92);transform-origin:50% 0">16</div>
<div class="t" style="top:545px;font-size:15.5px;left:8.5px;color:#1f1f1f;transform:scaleX(0.92);transform-origin:50% 0">17</div>
<div class="t" style="top:568px;font-size:15.5px;left:8.5px;color:#1f1f1f;transform:scaleX(0.92);transform-origin:50% 0">18</div>
<div class="t" style="top:591px;font-size:15.5px;left:8.5px;color:#1f1f1f;transform:scaleX(0.92);transform-origin:50% 0">19</div>
<div class="t" style="top:614px;font-size:15.5px;left:8.5px;color:#1f1f1f;transform:scaleX(0.92);transform-origin:50% 0">20</div>
<div class="t" style="top:637px;font-size:15.5px;left:8.5px;color:#1f1f1f;transform:scaleX(0.92);transform-origin:50% 0">21</div>
<div class="t" style="top:660px;font-size:15.5px;left:8.5px;color:#1f1f1f;transform:scaleX(0.92);transform-origin:50% 0">22</div>
<div class="t" style="top:683px;font-size:15.5px;left:8.5px;color:#1f1f1f;transform:scaleX(0.92);transform-origin:50% 0">23</div>
<div class="t" style="top:706px;font-size:15.5px;left:8.5px;color:#1f1f1f;transform:scaleX(0.92);transform-origin:50% 0">24</div>
<div class="t" style="top:729px;font-size:15.5px;left:8.5px;color:#1f1f1f;transform:scaleX(0.92);transform-origin:50% 0">25</div>
<div class="t" style="top:752px;font-size:15.5px;left:8.5px;color:#1f1f1f;transform:scaleX(0.92);transform-origin:50% 0">26</div>
<div class="t" style="top:775px;font-size:15.5px;left:8.5px;color:#1f1f1f;transform:scaleX(0.92);transform-origin:50% 0">27</div>
<div class="t" style="top:798px;font-size:15.5px;left:8.5px;color:#1f1f1f;transform:scaleX(0.92);transform-origin:50% 0">28</div>
<div class="t" style="top:821px;font-size:15.5px;left:8.5px;color:#1f1f1f;transform:scaleX(0.92);transform-origin:50% 0">29</div>
<div class="t" style="top:845px;font-size:15.5px;left:8.5px;color:#1f1f1f;transform:scaleX(0.92);transform-origin:50% 0">30</div>
<div class="t" style="top:870px;font-size:15.5px;left:8.5px;color:#1f1f1f;transform:scaleX(0.92);transform-origin:50% 0">31</div>
<div class="t" style="top:893px;font-size:15.5px;left:8.5px;color:#1f1f1f;transform:scaleX(0.92);transform-origin:50% 0">32</div>
<div class="t" style="top:916px;font-size:15.5px;left:8.5px;color:#1f1f1f;transform:scaleX(0.92);transform-origin:50% 0">33</div>
<div class="t" style="top:939px;font-size:15.5px;left:8.5px;color:#1f1f1f;transform:scaleX(0.92);transform-origin:50% 0">34</div>
<div class="t" style="top:962px;font-size:15.5px;left:8.5px;color:#1f1f1f;transform:scaleX(0.92);transform-origin:50% 0">35</div></main>
<section id="sheettabs">
<div style="left:0;top:982px;width:1488px;height:28px;background:#e6e6e6"></div>
<div style="left:0;top:982px;width:1488px;height:1px;background:#9e9e9e"></div>
<div style="left:100px;top:981px;width:65px;height:26px;background:#fff;border-bottom:2px solid #217346;box-sizing:border-box"></div>
<div style="left:100px;top:982px;width:1px;height:23px;background:#a9a9a9"></div>
<div style="left:164px;top:982px;width:1px;height:23px;background:#a9a9a9"></div>
<div class="t" style="top:988px;font-size:13.3px;left:112.0px;color:#217346;font-weight:bold;transform:scaleX(0.9241);transform-origin:0 0">Sheet1</div>
<svg style="left:0;top:982px" width="1488" height="28" viewBox="0 982 1488 28" fill="none">
<path d="M31.3 992.2V998.8L26.8 995.5Z" fill="#c3c3c3"/><path d="M55.8 992.2V998.8L60.3 995.5Z" fill="#c3c3c3"/>
<circle cx="205.8" cy="995.8" r="7.4" stroke="#6e6e6e" stroke-width="1.2"/><path d="M201.8 995.8H209.8M205.8 991.8V999.8" stroke="#6e6e6e" stroke-width="1.8"/>
<g fill="#a0a0a0"><rect x="1152" y="990.8" width="1.9" height="1.9"/><rect x="1152" y="994.8" width="1.9" height="1.9"/><rect x="1152" y="998.8" width="1.9" height="1.9"/></g>
<rect x="1169.5" y="989.5" width="320" height="14" fill="#fff" stroke="#8c8c8c"/>
<path d="M1184.5 989.5V1003.5" stroke="#8c8c8c"/>
<path d="M1178 992.8V1000.2L1173.6 996.5Z" fill="#1a1a1a"/>
</svg></section>
<footer id="statusbar">
<div style="left:0;top:1010px;width:1488px;height:21px;background:#f3f2f1;border-top:1px solid #cfcfcf;box-sizing:border-box"></div>
<div class="t g" style="top:1017px;font-size:11.1px;left:11.0px;color:#444444;transform:scaleX(0.9539);transform-origin:0 0">Ready</div>
<div class="t g" style="top:1017px;font-size:11.1px;left:79.4px;color:#444444;transform:scaleX(1.0388);transform-origin:0 0">Accessibility: Good to go</div>
<svg style="left:60px;top:1012px" width="20" height="19" viewBox="60 1012 20 19" fill="none" stroke="#474747" stroke-width="1.35" stroke-linecap="round" stroke-linejoin="round">
<circle cx="68" cy="1016" r="1.7"/>
<path d="M66.2 1018.4C64.6 1017 62.4 1016.6 62.5 1018C62.6 1019.2 64.6 1019.4 66 1019.6V1022.4C65.8 1024.4 64.2 1025.6 64.4 1027.2C64.6 1027.8 65.4 1027.8 65.8 1027.4"/>
<path d="M69.8 1018.4C71.4 1017 73.6 1016.6 73.5 1018C73.4 1019.2 71.4 1019.4 70.4 1019.6V1021.8"/>
<path d="M68.8 1024.8L71.2 1027.2L76.6 1022.2"/>
</svg></footer>
</div></body></html>
